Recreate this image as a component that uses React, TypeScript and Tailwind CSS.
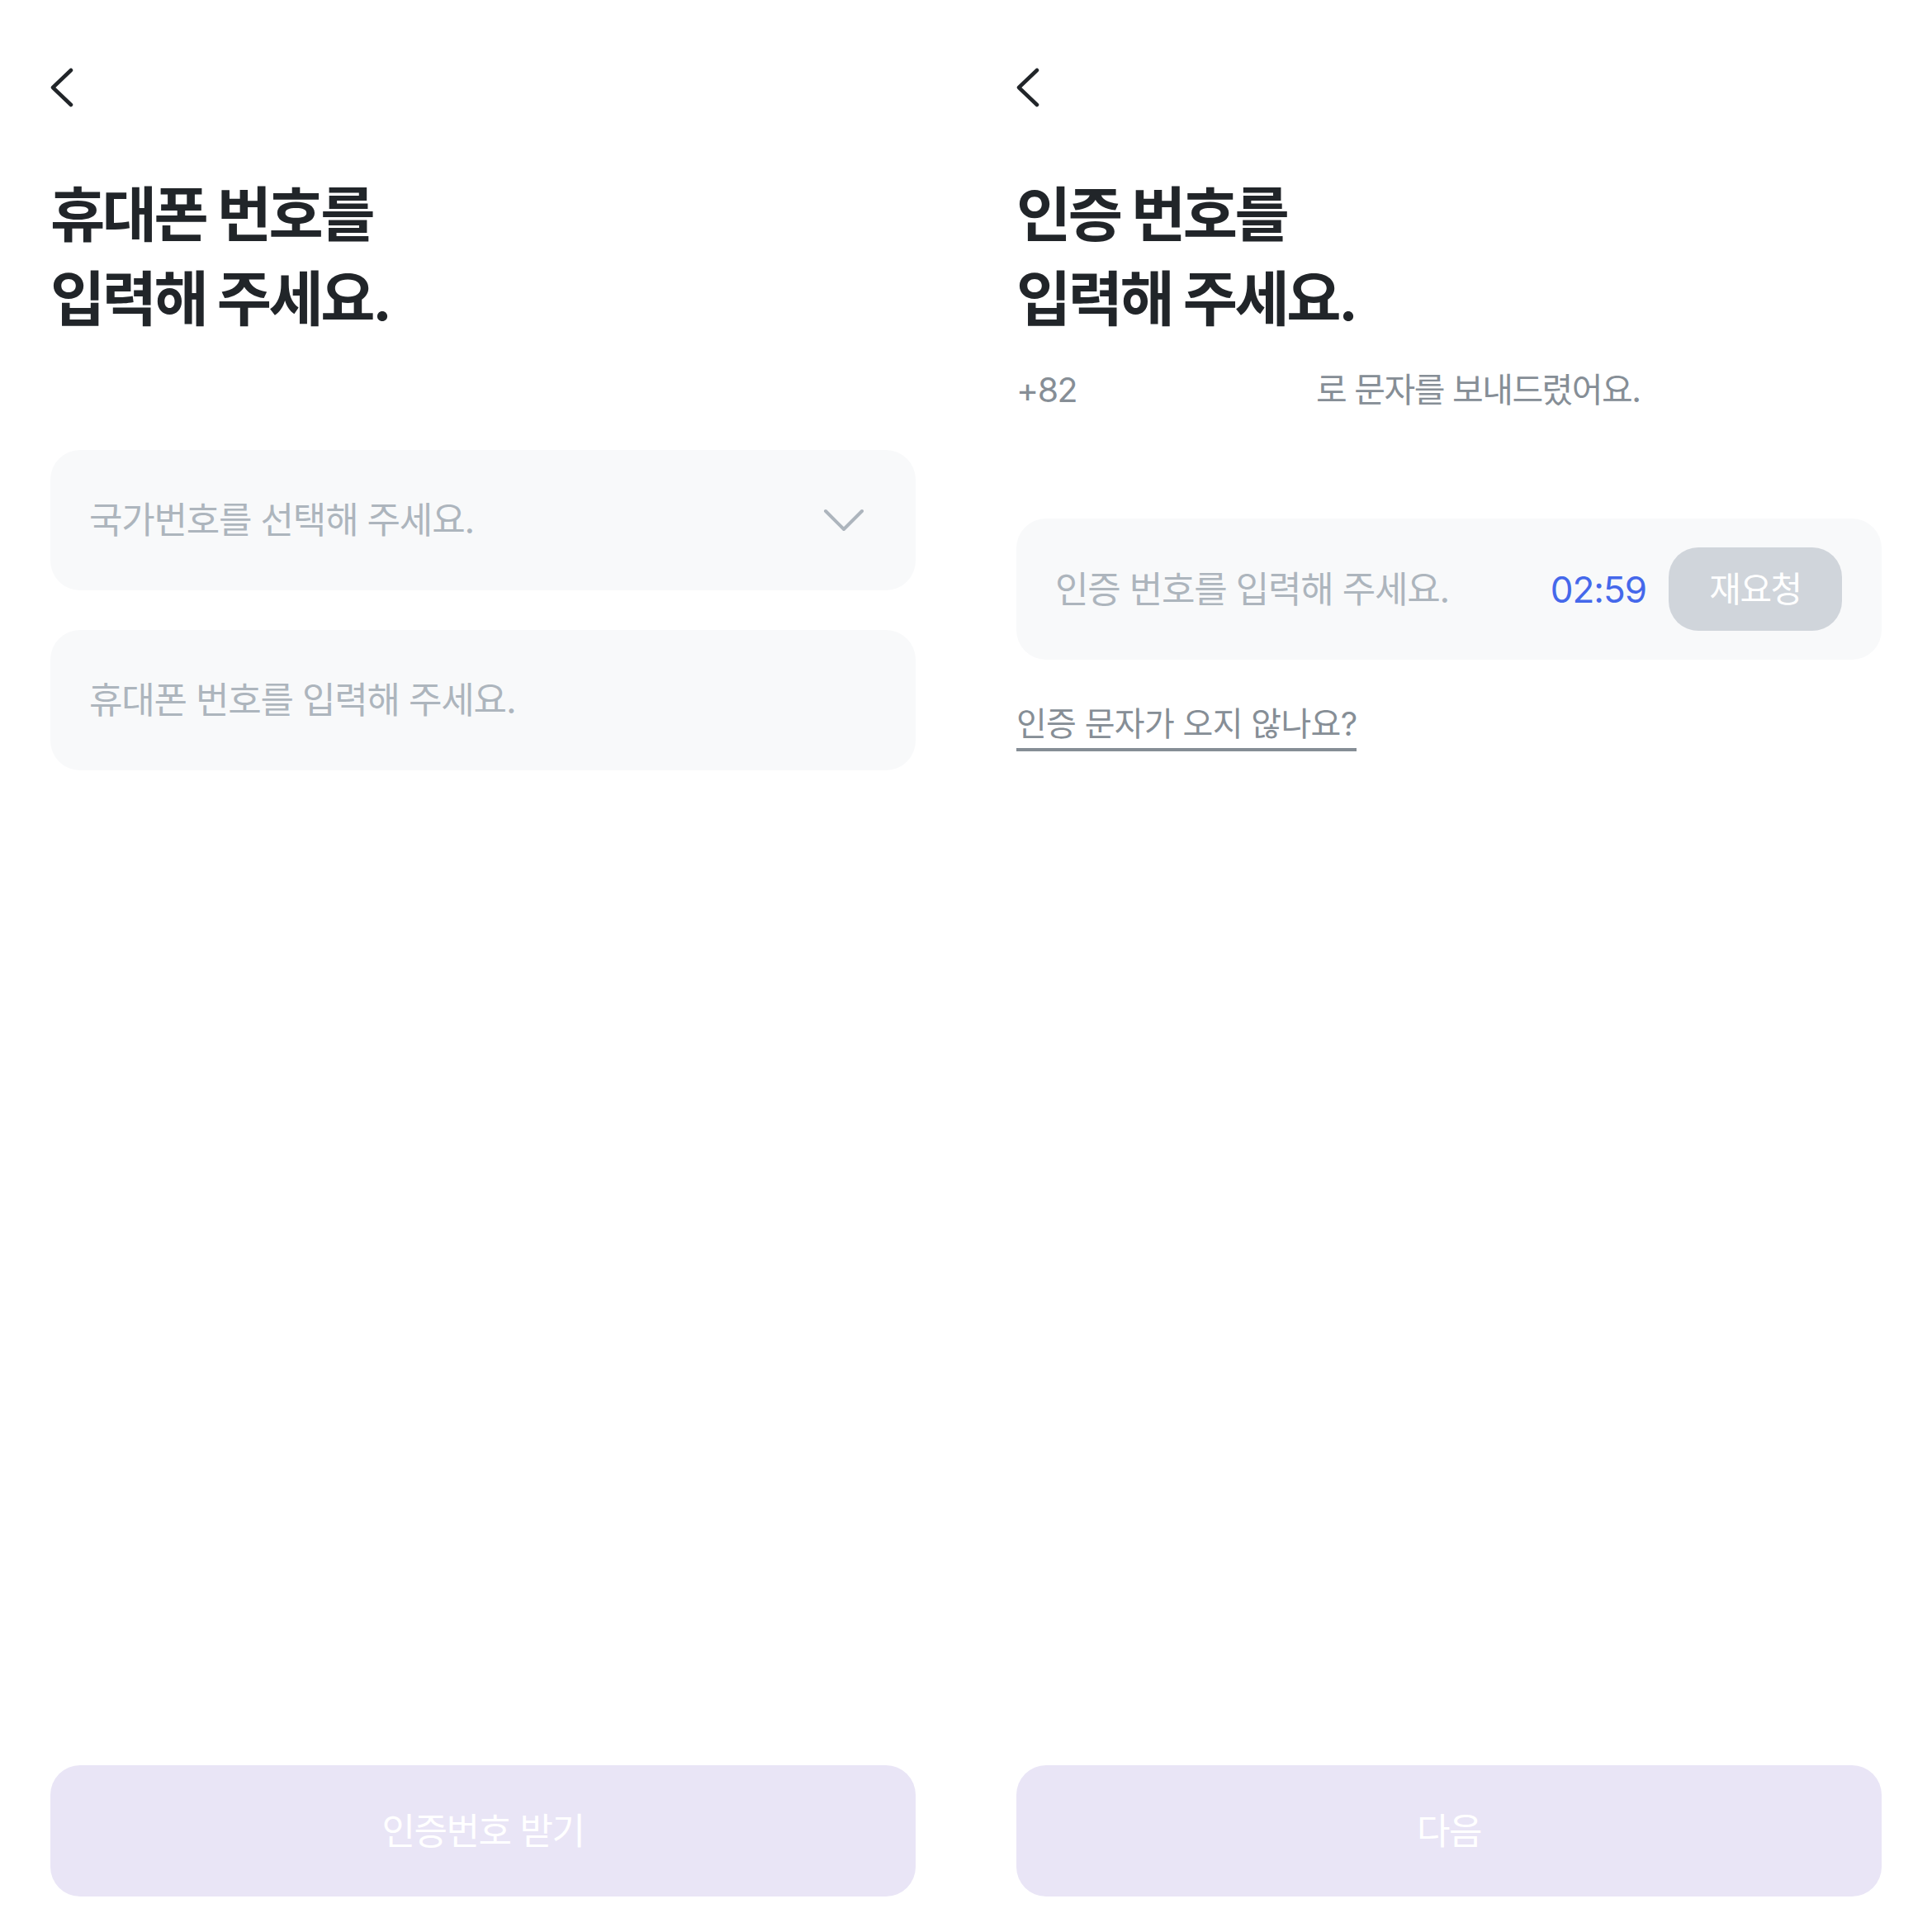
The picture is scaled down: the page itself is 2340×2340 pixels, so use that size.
import React from "react";

const FONT = "font-['Inter','Noto_Sans_CJK_KR',sans-serif]";

function BackIcon() {
  return (
    <svg width="28" height="48" viewBox="0 0 28 48" fill="none" className="block">
      <path d="M25 3 L3 24 L25 45" stroke="#212529" strokeWidth="4.5" strokeLinecap="round" strokeLinejoin="round" />
    </svg>
  );
}

function ChevronDown() {
  return (
    <svg width="50" height="28" viewBox="0 0 50 28" fill="none" className="block shrink-0">
      <path d="M3 3 L25 25 L47 3" stroke="#adb5bd" strokeWidth="4" strokeLinecap="round" strokeLinejoin="round" />
    </svg>
  );
}

interface ScreenProps {
  titleTop: string;
  buttonLabel: string;
  children: React.ReactNode;
}

function Screen({ titleTop, buttonLabel, children }: ScreenProps) {
  return (
    <div className="flex h-[2340px] w-[1170px] flex-col bg-white pl-[61px] pr-[61px] pt-[82px]">
      {/* Header */}
      <button className="h-[48px] w-[28px] cursor-pointer">
        <BackIcon />
      </button>

      {/* Title */}
      <h1 className="mt-[79px] text-[72px] font-bold leading-[102px] tracking-[-3.5px] text-[#212529]">
        {titleTop}
        <br />
        입력해 주세요.
      </h1>

      {children}

      {/* Bottom action */}
      <button
        disabled
        className="mb-[43px] mt-auto flex h-[159px] w-full items-center justify-center rounded-[36px] bg-[#e9e5f6] text-[44px] leading-none tracking-[-1.5px] text-white"
      >
        {buttonLabel}
      </button>
    </div>
  );
}

export default function App() {
  return (
    <div className={`flex w-[2340px] bg-white ${FONT}`}>
      {/* Phone number step */}
      <Screen titleTop="휴대폰 번호를" buttonLabel="인증번호 받기">
        <div className="mt-[132px] flex h-[170px] items-center justify-between rounded-[36px] bg-[#f8f9fa] pl-[47px] pr-[62px]">
          <span className="text-[44px] leading-none tracking-[-1.2px] text-[#adb5bd]">국가번호를 선택해 주세요.</span>
          <ChevronDown />
        </div>
        <div className="mt-[48px] flex h-[170px] items-center rounded-[36px] bg-[#f8f9fa] pl-[47px] pr-[60px]">
          <span className="text-[44px] leading-none tracking-[-1.2px] text-[#adb5bd]">휴대폰 번호를 입력해 주세요.</span>
        </div>
      </Screen>

      {/* Verification code step */}
      <Screen titleTop="인증 번호를" buttonLabel="다음">
        <p className="mt-[29px] text-[41px] leading-[60px] tracking-[-1.5px] text-[#868e96]">
          <span>+82</span>
          <span className="ml-[290px]">로 문자를 보내드렸어요.</span>
        </p>
        <div className="mt-[126px] flex h-[171px] items-center rounded-[36px] bg-[#f8f9fa] pl-[47px] pr-[48px]">
          <span className="flex-1 text-[44px] leading-none tracking-[-1.2px] text-[#adb5bd]">인증 번호를 입력해 주세요.</span>
          <span className="mr-[27px] text-[44px] leading-none tracking-[-1px] text-[#4568eb]">02:59</span>
          <button className="flex h-[101px] w-[210px] items-center justify-center rounded-[36px] bg-[#d0d5db] text-[42px] leading-none tracking-[-1.5px] text-white">
            재요청
          </button>
        </div>
        <div className="mt-[55px]">
          <a className="inline-block cursor-pointer border-b-[4px] border-[#868e96] pb-[6px] text-[40px] leading-[46px] tracking-[-0.7px] text-[#868e96]">
            인증 문자가 오지 않나요?
          </a>
        </div>
      </Screen>
    </div>
  );
}
